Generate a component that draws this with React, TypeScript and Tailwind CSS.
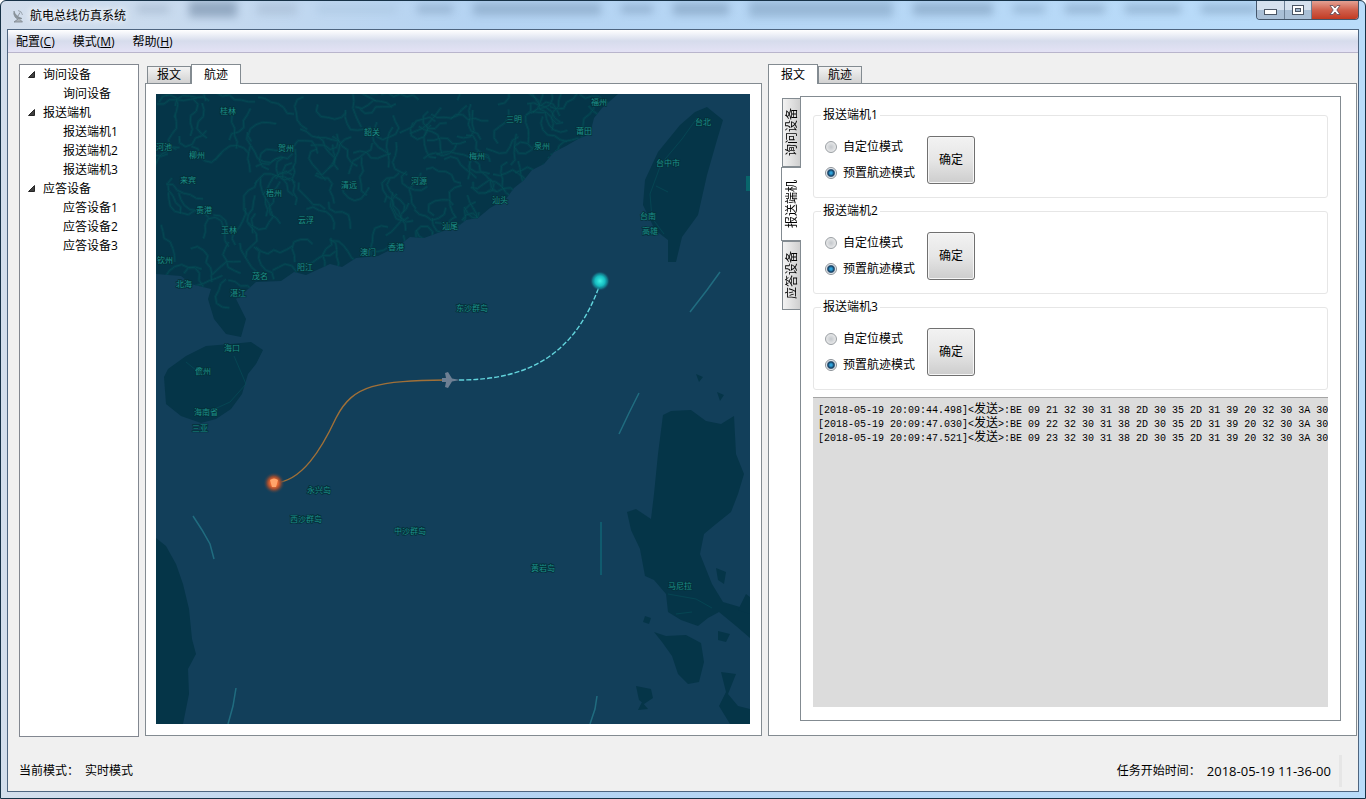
import type { ReactNode } from 'react';

const tree = [
  { name: '询问设备', children: ['询问设备'] },
  { name: '报送端机', children: ['报送端机1', '报送端机2', '报送端机3'] },
  { name: '应答设备', children: ['应答设备1', '应答设备2', '应答设备3'] },
];

const menus = [
  { label: '配置', key: 'C' },
  { label: '模式', key: 'M' },
  { label: '帮助', key: 'H' },
];

const logs = [
  { time: '2018-05-19 20:09:44.498', data: 'BE 09 21 32 30 31 38 2D 30 35 2D 31 39 20 32 30 3A 30' },
  { time: '2018-05-19 20:09:47.030', data: 'BE 09 22 32 30 31 38 2D 30 35 2D 31 39 20 32 30 3A 30' },
  { time: '2018-05-19 20:09:47.521', data: 'BE 09 23 32 30 31 38 2D 30 35 2D 31 39 20 32 30 3A 30' },
];

const places: [string, number, number][] = [
  ['桂林', 72, 20], ['河池', 8, 56], ['柳州', 41, 64], ['贺州', 130, 57], ['韶关', 216, 41],
  ['来宾', 32, 89], ['梧州', 118, 102], ['贵港', 48, 119], ['清远', 193, 94], ['河源', 263, 90],
  ['玉林', 73, 139], ['云浮', 150, 129], ['钦州', 9, 169], ['阳江', 149, 176], ['茂名', 104, 185],
  ['北海', 28, 193], ['湛江', 82, 202], ['澳门', 212, 161], ['香港', 240, 156], ['汕尾', 294, 135],
  ['福州', 443, 11], ['三明', 358, 28], ['莆田', 428, 40], ['泉州', 386, 55], ['梅州', 321, 65],
  ['汕头', 344, 109], ['台北', 547, 31], ['台中市', 512, 72], ['台南', 492, 125], ['高雄', 494, 140],
  ['海口', 76, 257], ['儋州', 47, 280], ['海南省', 50, 321], ['三亚', 44, 337], ['东沙群岛', 316, 217],
  ['永兴岛', 163, 399], ['西沙群岛', 150, 428], ['中沙群岛', 254, 440], ['黄岩岛', 387, 477], ['马尼拉', 524, 495],
];

const mainland =
  'M0 0H462L446 14L438 24L434 40L422 45L410 52L398 58L388 70L376 76L368 86L358 94L350 105L334 114L322 124L310 126L300 134L290 136L268 144L254 143L242 152L222 162L200 164L186 173L174 170L150 181L138 178L125 187L100 188L90 197L80 205L90 225L85 243L70 240L58 225L52 205L55 195L35 190L25 182L0 180Z';

// short winding roads, the same on every render
function buildRoads() {
  let seed = 7;
  const rand = () => {
    seed = (seed * 16807) % 2147483647;
    return seed / 2147483647;
  };
  const roads: string[] = [];
  for (let i = 0; i < 230; i++) {
    let x = rand() * 460;
    let y = rand() * 200;
    let angle = rand() * 6.28;
    let d = `M${x.toFixed(1)} ${y.toFixed(1)}`;
    for (let j = 0; j < 6; j++) {
      angle += (rand() - 0.5) * 2;
      x += Math.cos(angle) * 7;
      y += Math.sin(angle) * 7;
      d += `L${x.toFixed(1)} ${y.toFixed(1)}`;
    }
    roads.push(d);
  }
  return roads.join('');
}

const roads = buildRoads();

function TrackMap() {
  return (
    <svg
      viewBox="0 0 594 630"
      preserveAspectRatio="xMidYMid slice"
      className="block w-full flex-1 min-h-0 bg-[#123f5a]"
      role="img"
      aria-label="航迹"
    >
      <defs>
        <clipPath id="land">
          <path d={mainland} />
        </clipPath>
        <radialGradient id="endGlow">
          <stop offset="0" stopColor="#3ff0e4" />
          <stop offset="0.5" stopColor="#16bcc0" />
          <stop offset="0.75" stopColor="#14909e" stopOpacity="0.7" />
          <stop offset="1" stopColor="#123f5a" stopOpacity="0" />
        </radialGradient>
        <radialGradient id="startGlow">
          <stop offset="0" stopColor="#ff9a5c" />
          <stop offset="0.35" stopColor="#e8662f" />
          <stop offset="0.6" stopColor="#8a4a35" />
          <stop offset="1" stopColor="#123f5a" stopOpacity="0" />
        </radialGradient>
      </defs>

      <g fill="#053548">
        <path d={mainland} />
        <path d="M8 283L12 275L30 262L50 252L75 250L95 248L107 256L100 270L92 280L86 300L75 315L60 325L45 329L25 322L10 310Z" />
        <path d="M551 13L567 26L561 46L551 81L542 121L526 143L520 168L512 168L512 146L499 136L487 111L489 86L502 58L524 31L539 18Z" />
        <path d="M507 321L515 317L535 316L550 327L565 330L578 322L580 360L588 380L582 400L575 418L560 430L548 440L544 460L550 475L556 490L567 508L594 516V544L580 532L563 518L552 524L542 532L525 526L512 518L510 500L498 486L489 482L484 455L475 436L471 418L480 415L495 425L498 400L502 360Z" />
        <path d="M498 538L510 542L530 541L545 549L548 568L543 588L532 590L522 580L516 562L506 548Z" />
        <path d="M0 444L10 452L20 470L27 490L33 515L36 545L40 560L32 575L33 600L27 630H0Z" />
        <path d="M480 592L495 595L497 604L488 610L483 606ZM486 608L492 615L482 616ZM562 537L574 540L570 548L562 546ZM590 500L594 503V520L582 516ZM565 578L580 580L572 600L582 612L594 615V630H574L563 612L570 598ZM489 522L495 524L493 530L487 528ZM560 474L570 478L568 490L562 486ZM540 280L547 283L543 288ZM561 298L568 301L564 307Z" />
      </g>

      <g clipPath="url(#land)" fill="none">
        <path d={roads} stroke="#055058" strokeWidth="3" opacity="0.3" />
        <path d={roads} stroke="#06545a" strokeWidth="1" opacity="0.5" />
      </g>
      <g fill="none" stroke="#06505a" opacity="0.6">
        <path d="M541 24L526 45L505 70L494 100L496 124L508 140M500 92L512 98M78 262L90 290L74 308L52 318M30 268L46 281" />
        <path d="M512 500L540 505L556 514M520 520L536 518" />
      </g>

      <g fill="none" stroke="#24788a" strokeWidth="1.5" opacity="0.8">
        <path d="M564 178L551 196L534 218" />
        <path d="M483 299L473 319L463 340" />
        <path d="M445 428V481" stroke="#0f6f7c" />
        <path d="M37 422L46 436L54 450L58 465" />
        <path d="M80 594L77 612L72 630M441 602L439 615L434 630" />
      </g>
      <rect x="590" y="82" width="4" height="15" fill="#08656b" />

      <g
        fill="#1c8f87"
        stroke="#04303a"
        strokeWidth="1.5"
        paintOrder="stroke"
        fontSize="8"
        textAnchor="middle"
        fontFamily="'Noto Sans CJK SC', sans-serif"
      >
        {places.map(([name, x, y]) => (
          <text key={name} x={x} y={y}>
            {name}
          </text>
        ))}
      </g>

      <path d="M118 389C146 388 166 354 180 324C197 290 222 287 291 286" fill="none" stroke="#a07038" strokeWidth="1.4" />
      <path d="M303 286C376 286 420 258 444 190" fill="none" stroke="#62d4dc" strokeWidth="1.4" strokeDasharray="5 2" />
      <circle cx="444" cy="187" r="10" fill="url(#endGlow)" />
      <circle cx="118" cy="389" r="11" fill="url(#startGlow)" />
      <path d="M114 386Q118 383 122 386L120 393H116Z" fill="#ffa46a" />
      <path d="M304 286L296 284.500L292 278L289 279L290 284L286 284L286 288L290 288L289 293L292 294L296 287.500Z" fill="#6d7f93" />
    </svg>
  );
}

function Tab({ active, children }: { active?: boolean; children: ReactNode }) {
  return (
    <button
      type="button"
      className={
        active
          ? 'relative z-10 -mb-px h-5 w-[50px] border border-b-0 border-[#838b91] bg-white leading-5'
          : 'h-[17px] w-[44px] border border-b-0 border-[#838b91] bg-linear-to-b from-[#f3f3f3] to-[#d2d2d2] leading-4'
      }
    >
      {children}
    </button>
  );
}

function SideTab({ active, children }: { active?: boolean; children: ReactNode }) {
  return (
    <button
      type="button"
      className={
        active
          ? 'relative z-10 -mr-px flex h-[74px] w-5 items-center justify-center border border-r-0 border-[#838b91] bg-white'
          : 'flex h-[69px] w-[18px] items-center justify-center border border-r-0 border-[#838b91] bg-linear-to-r from-[#f3f3f3] to-[#cfcfcf]'
      }
    >
      <span className="rotate-180 leading-4 whitespace-nowrap [text-orientation:sideways] [writing-mode:vertical-rl]">
        {children}
      </span>
    </button>
  );
}

function Radio({ name, label, checked }: { name: string; label: string; checked?: boolean }) {
  return (
    <label className="flex h-[26px] items-center gap-[6px]">
      <input
        type="radio"
        name={name}
        defaultChecked={checked}
        className="size-3 shrink-0 appearance-none rounded-full border border-[#9a9fa3] bg-radial from-[#c4c8cc] to-[#f6f6f6] checked:border-[#8a9096] checked:bg-radial checked:from-[#2fa3dc] checked:from-15% checked:via-[#123a5c] checked:via-45% checked:to-[#eef2f5] checked:to-65%"
      />
      {label}
    </label>
  );
}

function Terminal({ index }: { index: number }) {
  const name = `terminal-${index}`;
  return (
    <fieldset className="rounded-[3px] border border-[#e6e6e6] pb-[11px] pl-[11px]">
      <legend className="-ml-1 px-[2px] leading-5">报送端机{index}</legend>
      <div className="flex pt-[11px]">
        <div className="w-[102px] shrink-0 -mt-[2px]">
          <Radio name={name} label="自定位模式" />
          <Radio name={name} label="预置航迹模式" checked />
        </div>
        <button
          type="button"
          className="size-12 shrink-0 rounded-[3px] border border-[#707070] bg-linear-to-b from-[#f2f2f2] from-0% via-[#e6e6e6] via-50% to-[#cdcdcd] shadow-[inset_0_0_0_1px_#f6f6f6]"
        >
          确定
        </button>
      </div>
    </fieldset>
  );
}

function TitleBar() {
  return (
    <header className="relative flex h-7 items-start justify-between overflow-hidden">
      <div className="absolute inset-x-0 top-0 flex h-4 items-center gap-5 pl-[130px] opacity-45 blur-[4px]">
        <span className="h-2 w-8 bg-[#8fa3ba]" />
        <span className="h-4 w-12 bg-[#566f8c]" />
        <span className="h-3 w-10 bg-[#9db1c8]" />
        <span className="h-2 w-20 bg-[#a3bfd9]" />
        <span className="h-2 w-9 bg-[#6f8dab]" />
        <span className="h-3 w-32 bg-[#6f8dab]" />
        <span className="h-2 w-8 bg-[#6886a5]" />
        <span className="h-3 w-14 bg-[#6886a5]" />
        <span className="h-4 w-36 bg-[#7393b2]" />
        <span className="h-3 w-20 bg-[#6886a5]" />
        <span className="h-2 w-8 bg-[#7393b2]" />
        <span className="h-2 w-10 bg-[#6886a5]" />
        <span className="h-2 w-14 bg-[#6886a5]" />
        <span className="h-2 w-14 bg-[#6886a5]" />
      </div>
      <div className="relative flex items-center gap-[4px] pt-[5px] pl-[3px]">
        <svg viewBox="0 0 16 16" className="size-4" fill="none" stroke="#7b848c">
          <path d="M4 3Q5 8 12 10.500Q7 12 5 9Q3 6 4 3Z" fill="#8c959d" strokeWidth="0.6" />
          <path d="M8 8L10 4.500" strokeWidth="0.8" />
          <path d="M8 11L4 14H12.500L10 11.500" fill="#aab1b8" strokeWidth="0.8" />
          <path d="M8 2.500Q12 3 12.500 7" strokeWidth="0.6" />
        </svg>
        <h1 className="leading-5 [text-shadow:0_0_6px_#fff,0_0_10px_#fff]">航电总线仿真系统</h1>
      </div>
      <div className="relative flex h-[19px] overflow-hidden rounded-b-[4px] border border-t-0 border-[#44566b]">
        <button type="button" aria-label="最小化" className="flex w-7 items-center justify-center border-r border-[#6b7f95] bg-linear-to-b from-[#d5e1ee] from-50% to-[#a9bfd6] to-50%">
          <svg viewBox="0 0 13 6" className="mt-1 h-[6px] w-[13px]">
            <rect x="0.500" y="0.500" width="12" height="5" fill="#fff" stroke="#4a5564" />
          </svg>
        </button>
        <button type="button" aria-label="最大化" className="flex w-[27px] items-center justify-center border-r border-[#6b7f95] bg-linear-to-b from-[#d5e1ee] from-50% to-[#a9bfd6] to-50%">
          <svg viewBox="0 0 12 10" className="h-[10px] w-3">
            <rect x="0.500" y="0.500" width="11" height="9" fill="#fff" stroke="#4a5564" />
            <rect x="3.500" y="3.500" width="5" height="3" fill="#9fb4ca" stroke="#4a5564" />
          </svg>
        </button>
        <button type="button" aria-label="关闭" className="flex w-[46px] items-center justify-center bg-linear-to-b from-[#e3a193] via-[#d0604c] via-50% to-[#c23a22]">
          <svg viewBox="0 0 12 10" className="h-[10px] w-3">
            <path d="M1 0.500H4L6 3L8 0.500H11L7.800 5L11 9.500H8L6 7L4 9.500H1L4.200 5Z" fill="#fff" stroke="#5b4a55" strokeWidth="0.800" />
          </svg>
        </button>
      </div>
    </header>
  );
}

export default function App() {
  return (
    <div className="flex min-h-screen flex-col rounded-t-[6px] border border-[#173247] bg-linear-to-r from-[#d3deec] via-[#b4d3f2] via-35% to-[#b9dcfa] px-[6px] pb-[6px] font-['Open_Sans','Noto_Sans_CJK_SC',sans-serif] text-[12px] text-black">
      <TitleBar />
      <div className="flex flex-1 flex-col border border-[#4e6580] bg-[#f0f0f0]">
        <nav className="flex h-[23px] items-center gap-[18px] border-b border-[#b9b5cc] bg-linear-to-b from-white via-[#d6dcec] via-50% to-[#e4e2f5] pt-[2px] pl-2">
          {menus.map((menu) => (
            <button key={menu.key} type="button">
              {menu.label}(<u>{menu.key}</u>)
            </button>
          ))}
        </nav>

        <main className="grid flex-1 grid-cols-[120px_617fr_589fr] gap-[6px] pt-[11px] pr-px pl-[11px]">
          <aside className="border border-[#828790] bg-white">
            <ul>
              {tree.map((group) => (
                <li key={group.name}>
                  <div className="flex h-[19px] items-center gap-2 pl-2">
                    <svg viewBox="0 0 7 7" className="size-[7px]">
                      <path d="M6.500 0.500V6.500H0.500Z" fill="#404040" stroke="#262626" />
                    </svg>
                    {group.name}
                  </div>
                  <ul>
                    {group.children.map((child) => (
                      <li key={child} className="h-[19px] pl-[43px] leading-[19px]">
                        {child}
                      </li>
                    ))}
                  </ul>
                </li>
              ))}
            </ul>
          </aside>

          <section className="flex min-w-0 flex-col pb-px">
            <div className="flex items-end pl-[2px]">
              <Tab>报文</Tab>
              <Tab active>航迹</Tab>
            </div>
            <div className="flex flex-1 flex-col border border-[#838b91] bg-white pt-[10px] pr-[11px] pb-[11px] pl-[10px]">
              <TrackMap />
            </div>
          </section>

          <section className="flex min-w-0 flex-col pb-px">
            <div className="flex items-end">
              <Tab active>报文</Tab>
              <Tab>航迹</Tab>
            </div>
            <div className="flex flex-1 border border-[#838b91] bg-white pt-3 pr-[15px] pb-[14px] pl-[11px]">
              <div className="flex w-5 shrink-0 flex-col items-end pt-[2px]">
                <SideTab>询问设备</SideTab>
                <SideTab active>报送端机</SideTab>
                <SideTab>应答设备</SideTab>
              </div>
              <div className="flex min-w-0 flex-1 flex-col gap-[3px] border border-[#838b91] px-3 pt-2 pb-[13px]">
                <Terminal index={1} />
                <Terminal index={2} />
                <Terminal index={3} />
                <div className="mt-1 flex-1 overflow-hidden border-t border-[#a5a5a5] bg-[#dcdcdc] pt-[5px] pl-[5px] font-['Liberation_Mono','Noto_Sans_CJK_SC',monospace] text-[10px]">
                  {logs.map((log) => (
                    <p key={log.time} className="h-[14px] leading-[14px] whitespace-pre">
                      [{log.time}]&lt;<span className="text-[12px]">发送</span>&gt;:{log.data}
                    </p>
                  ))}
                </div>
              </div>
            </div>
          </section>
        </main>

        <footer className="flex h-[54px] items-center justify-between pt-[14px] pl-[11px]">
          <p className="flex items-center gap-[6px]">
            <span>当前模式：</span>
            <span>实时模式</span>
          </p>
          <div className="flex items-center gap-2 pr-4">
            <p className="flex items-center gap-[6px]">
              <span>任务开始时间：</span>
              <span className="text-[13px] leading-4">2018-05-19 11-36-00</span>
            </p>
            <span className="h-8 w-[3px] bg-[#e6e6e6]" />
          </div>
        </footer>
      </div>
    </div>
  );
}
